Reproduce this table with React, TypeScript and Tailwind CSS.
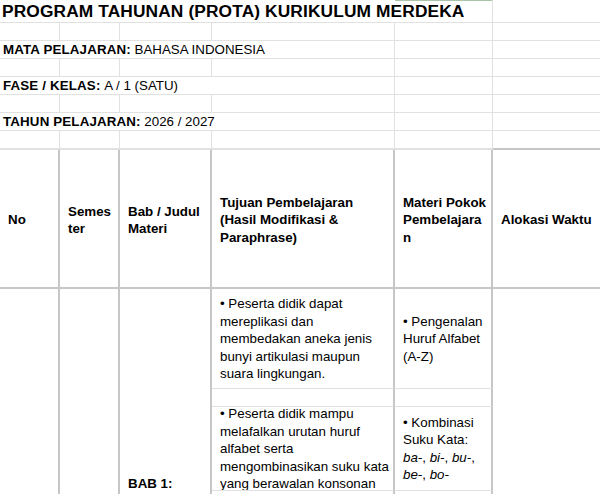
import React from "react";

const LIGHT = "border-[#e1e1e1]";
const TB = "border-[#c6c6c6]";

function Lines({ lines, bold = false }: { lines: React.ReactNode[]; bold?: boolean }) {
  return (
    <div className={bold ? "font-bold" : ""}>
      {lines.map((l, i) => (
        <div key={i} className="whitespace-nowrap">
          {l}
        </div>
      ))}
    </div>
  );
}

function EmptyRow({ row, last = false }: { row: string; last?: boolean }) {
  const b = last ? `border-b-2 ${TB}` : `border-b ${LIGHT}`;
  return (
    <>
      <div className={`${row} col-start-1 border-r ${LIGHT} ${b}`} />
      <div className={`${row} col-start-2 border-r ${LIGHT} ${b}`} />
      <div className={`${row} col-start-3 border-r ${LIGHT} ${b}`} />
      <div className={`${row} col-start-4 border-r ${LIGHT} ${b}`} />
      <div className={`${row} col-start-5 border-r ${LIGHT} ${b}`} />
      <div className={`${row} col-start-6 ${b}`} />
    </>
  );
}

function LabelRow({ row, label, value }: { row: string; label: string; value: string }) {
  return (
    <>
      <div className={`${row} col-start-1 col-span-4 border-r border-b ${LIGHT} flex items-center pl-[3px] whitespace-nowrap`}>
        <span className="font-bold tracking-[0.15px]">{label}</span>
        <span>&nbsp;{value}</span>
      </div>
      <div className={`${row} col-start-5 border-r border-b ${LIGHT}`} />
      <div className={`${row} col-start-6 border-b ${LIGHT}`} />
    </>
  );
}

export default function App() {
  const head = `row-start-9 border-r-2 border-b-2 ${TB} flex items-center pl-2 pt-[3px] font-bold`;
  return (
    <div className="w-[600px] h-[494px] overflow-hidden bg-white text-black font-['Liberation_Sans',Arial,sans-serif] text-[13.33px] leading-[17.5px]">
      <div className="grid grid-cols-[60px_60px_92px_183px_98px_107px] grid-rows-[23px_18px_18px_18px_18px_18px_18px_19px_139px_100px_18px_84px_100px]">
        {/* Title row */}
        <div className={`row-start-1 col-start-1 col-span-5 border-r border-b ${LIGHT} flex items-center pl-[2px] whitespace-nowrap`}>
          <span className="font-bold text-[17.33px] leading-[20px] tracking-[0.12px]">PROGRAM TAHUNAN (PROTA) KURIKULUM MERDEKA</span>
        </div>
        <div className={`row-start-1 col-start-6 border-b ${LIGHT}`} />
        <div className="row-start-1 col-start-5 self-start h-px bg-[#a9c4a9] mr-[1px]" />

        <EmptyRow row="row-start-2" />
        <LabelRow row="row-start-3" label="MATA PELAJARAN:" value="BAHASA INDONESIA" />
        <EmptyRow row="row-start-4" />
        <LabelRow row="row-start-5" label="FASE / KELAS:" value="A / 1 (SATU)" />
        <EmptyRow row="row-start-6" />
        <LabelRow row="row-start-7" label="TAHUN PELAJARAN:" value="2026 / 2027" />
        <EmptyRow row="row-start-8" last />

        {/* Header row */}
        <div className={`${head} col-start-1`}>
          <Lines lines={["No"]} />
        </div>
        <div className={`${head} col-start-2`}>
          <Lines lines={["Semes", "ter"]} />
        </div>
        <div className={`${head} col-start-3`}>
          <Lines lines={["Bab / Judul", "Materi"]} />
        </div>
        <div className={`${head} col-start-4`}>
          <Lines lines={["Tujuan Pembelajaran", "(Hasil Modifikasi &", "Paraphrase)"]} />
        </div>
        <div className={`${head} col-start-5`}>
          <Lines lines={["Materi Pokok", "Pembelajara", "n"]} />
        </div>
        <div className={`row-start-9 col-start-6 border-b-2 ${TB} flex items-center pl-2 pt-[3px] font-bold`}>
          <Lines lines={["Alokasi Waktu"]} />
        </div>

        {/* Body: merged columns */}
        <div className={`row-start-10 row-span-4 col-start-1 border-r-2 ${TB}`} />
        <div className={`row-start-10 row-span-4 col-start-2 border-r-2 ${TB}`} />
        <div className={`row-start-10 row-span-4 col-start-3 border-r-2 ${TB} pl-2 pt-[186px] font-bold`}>
          BAB 1:
        </div>
        <div className="row-start-10 row-span-4 col-start-6" />

        {/* Tujuan column */}
        <div className={`row-start-10 col-start-4 border-r-2 ${TB} border-b !border-b-[#e1e1e1] flex items-center pl-2 pt-[1px]`}>
          <Lines
            lines={[
              "• Peserta didik dapat",
              "mereplikasi dan",
              "membedakan aneka jenis",
              "bunyi artikulasi maupun",
              "suara lingkungan.",
            ]}
          />
        </div>
        <div className={`row-start-11 col-start-4 border-r-2 ${TB} border-b !border-b-[#e1e1e1]`} />
        <div className={`row-start-12 col-start-4 border-r-2 ${TB} border-b !border-b-[#e1e1e1] overflow-hidden pl-2`}>
          <div className="-mt-[2px]">
            <Lines
              lines={[
                "• Peserta didik mampu",
                "melafalkan urutan huruf",
                "alfabet serta",
                "mengombinasikan suku kata",
                "yang berawalan konsonan",
              ]}
            />
          </div>
        </div>
        <div className={`row-start-13 col-start-4 border-r-2 ${TB}`} />

        {/* Materi column */}
        <div className={`row-start-10 col-start-5 border-r-2 ${TB} border-b !border-b-[#e1e1e1] flex items-center pl-2 pt-[1px]`}>
          <Lines lines={["• Pengenalan", "Huruf Alfabet", "(A-Z)"]} />
        </div>
        <div className={`row-start-11 col-start-5 border-r-2 ${TB} border-b !border-b-[#e1e1e1]`} />
        <div className={`row-start-12 col-start-5 border-r-2 ${TB} border-b !border-b-[#e1e1e1] flex items-center pl-2`}>
          <Lines
            lines={[
              "• Kombinasi",
              "Suku Kata:",
              <>
                <i>ba-</i>, <i>bi-</i>, <i>bu-</i>,
              </>,
              <>
                <i>be-</i>, <i>bo-</i>
              </>,
            ]}
          />
        </div>
        <div className={`row-start-13 col-start-5 border-r-2 ${TB}`} />
      </div>
    </div>
  );
}
